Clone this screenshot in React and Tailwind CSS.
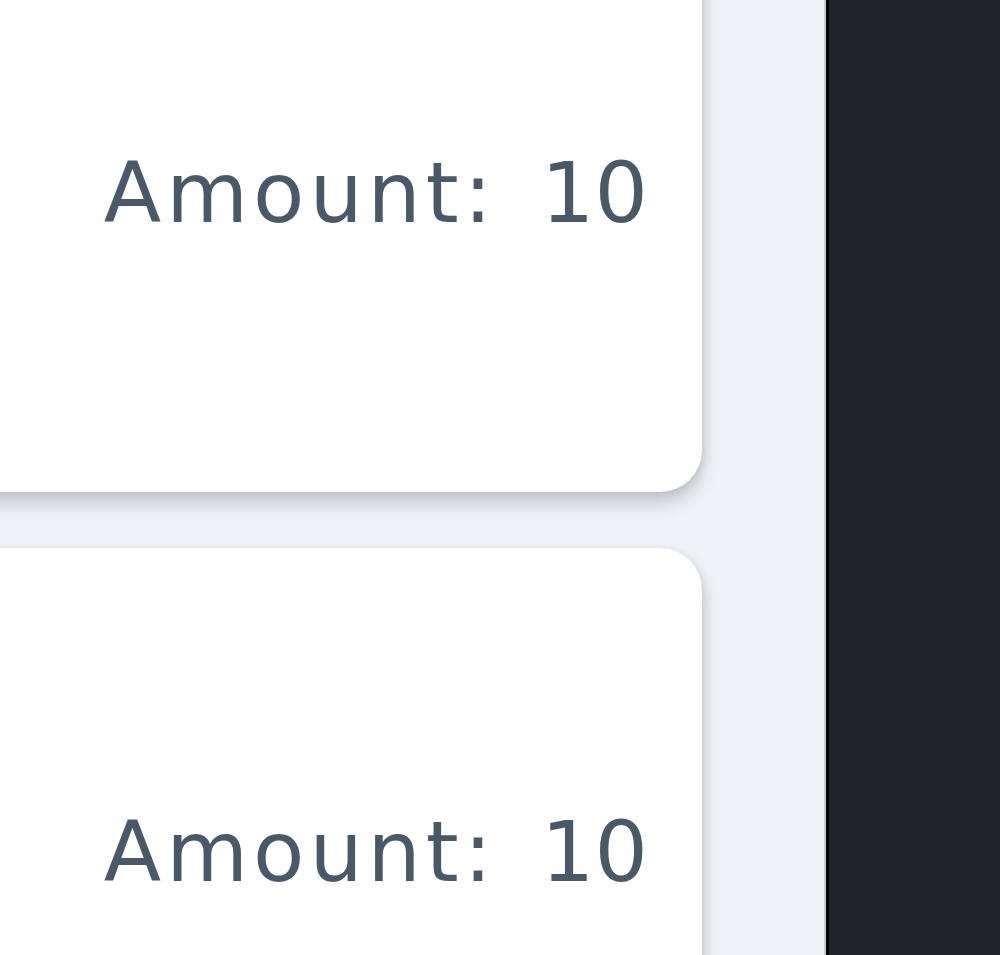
export default function App() {
  const cards = [{id: 1, amount: 10}, {id: 2, amount: 10}];

  return (
    <div className="flex h-[955px] w-[1000px] overflow-hidden bg-[#eff2f7] font-['DejaVu_Sans',sans-serif]">
      <div className="w-[824px] shrink-0 overflow-hidden">
        <div className="ml-[-300px] mt-[-111px] flex w-[1002px] flex-col gap-[56px]">
          {cards.map((card) => (
            <div
              key={card.id}
              className="flex h-[603px] items-start justify-end rounded-[42px] bg-white pr-[54px] pt-[262px] shadow-[0_12px_18px_rgba(40,50,60,0.2),2px_2px_10px_rgba(40,50,60,0.1)]"
            >
              <span className="text-[84px] leading-none text-[#4a5967]">
                <span className="tracking-[5px]">Amount:</span>
                <span className="ml-[44px]">{card.amount}</span>
              </span>
            </div>
          ))}
        </div>
      </div>
      <div className="w-[2px] shrink-0 bg-[#c9ccd1]" />
      <div className="flex-1 border-l-[3px] border-black bg-[#212529]" />
    </div>
  );
}
